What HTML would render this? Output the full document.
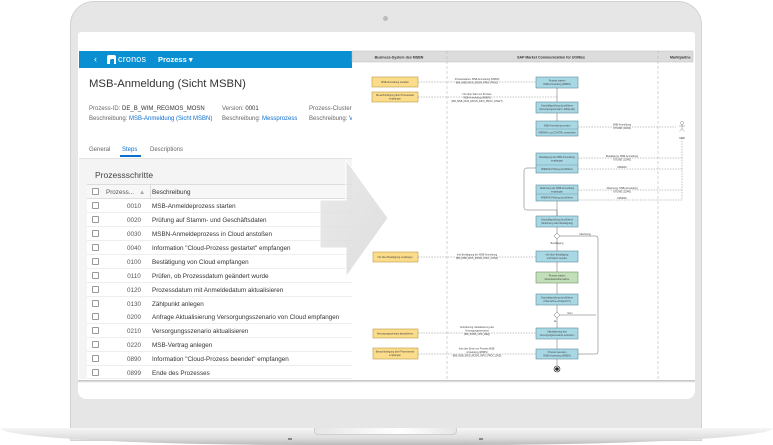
<!DOCTYPE html>
<html><head><meta charset="utf-8"><style>
*{margin:0;padding:0;box-sizing:border-box}
body{width:773px;height:445px;background:#fff;position:relative;overflow:hidden;font-family:"Liberation Sans",sans-serif;color:#333}
.a{position:absolute}
.t{position:absolute;white-space:nowrap}
.row{position:absolute;left:87px;width:265px;height:14px;background:#fff;border-bottom:1px solid #eee;font-size:6.3px}
.row .cb{position:absolute;left:5px;top:3px;width:7px;height:7px;border:1px solid #999;background:#fff;border-radius:1px}
.row .c{position:absolute;left:27px;width:40px;text-align:center;top:3.5px;color:#555}
.row .d{position:absolute;left:65px;top:3.5px;color:#333}
</style></head><body>
<div class="a" style="left:70px;top:1px;width:632px;height:440px;background:#e6e6e6;border:1px solid #d2d2d2;border-radius:24px 24px 0 0"></div>
<div class="a" style="left:383px;top:16px;width:5px;height:5px;border-radius:50%;background:#bbb"></div>
<div class="a" style="left:78px;top:32px;width:617px;height:367px;background:#fff;border-radius:3px 3px 8px 8px"></div>
<div class="a" style="left:78px;top:380px;width:617px;height:3px;background:linear-gradient(#bbb,#fff)"></div>
<div class="a" style="left:0;top:428px;width:773px;height:17px;background:linear-gradient(#f6f6f6,#dedede 60%,#b9b9b9);border-radius:0 0 40% 40%/0 0 100% 100%"></div>
<div class="a" style="left:314px;top:428px;width:143px;height:7px;background:linear-gradient(90deg,#e6e6e6,#fff 60%,#e6e6e6);border:1px solid #cfcfcf;border-top:none;border-radius:0 0 4px 4px"></div>
<div class="a" style="left:288px;top:438px;width:4px;height:2px;background:#888"></div>
<div class="a" style="left:479px;top:438px;width:4px;height:2px;background:#888"></div>

<div class="a" style="left:79px;top:51px;width:273px;height:328px;background:#fff;overflow:hidden">
 <div class="a" style="left:0;top:0;width:273px;height:17px;background:#0a8fd2"></div>
 <div class="t" style="left:15px;top:3px;color:#fff;font-size:9px">‹</div>
 <div class="a" style="left:28px;top:4px;width:9px;height:9px;background:#fff;border-radius:2px 2px 0 0"></div>
 <div class="a" style="left:31px;top:8px;width:4px;height:5px;background:#0a8fd2;border-radius:2px 0 0 0"></div>
 <div class="t" style="left:39px;top:3px;color:#fff;font-size:9px;letter-spacing:0.2px">cronos</div>
 <div class="t" style="left:79px;top:3.5px;color:#fff;font-size:7.5px;font-weight:bold">Prozess ▾</div>
 <div class="t" style="left:10px;top:27px;font-size:11.3px;color:#333">MSB-Anmeldung (Sicht MSBN)</div>
 <div class="t" style="left:10px;top:55px;font-size:6px;color:#666">Prozess-ID: <span style="color:#333">DE_B_WIM_REGMOS_MOSN</span></div>
 <div class="t" style="left:10px;top:65px;font-size:6px;color:#666">Beschreibung: <span style="color:#0a6ed1">MSB-Anmeldung (Sicht MSBN)</span></div>
 <div class="t" style="left:143px;top:55px;font-size:6px;color:#666">Version: <span style="color:#333">0001</span></div>
 <div class="t" style="left:143px;top:65px;font-size:6px;color:#666">Beschreibung: <span style="color:#0a6ed1">Messprozess</span></div>
 <div class="t" style="left:230px;top:55px;font-size:6px;color:#666">Prozess-Cluster:</div>
 <div class="t" style="left:230px;top:65px;font-size:6px;color:#666">Beschreibung: <span style="color:#0a6ed1">V</span></div>
 <div class="t" style="left:10px;top:96px;font-size:6px;color:#666">General</div>
 <div class="t" style="left:43px;top:96px;font-size:6px;color:#0a6ed1">Steps</div>
 <div class="a" style="left:41px;top:104px;width:21px;height:2px;background:#0a6ed1"></div>
 <div class="t" style="left:71px;top:96px;font-size:6px;color:#666">Descriptions</div>
 <div class="a" style="left:0;top:107px;width:273px;height:221px;background:#f4f4f4;border-top:1px solid #e2e2e2"></div>
 <div class="t" style="left:16px;top:119px;font-size:8.5px;color:#444">Prozessschritte</div>
</div>
<div class="row" style="top:184px;height:15px;background:#f7f7f7;border-top:1px solid #ddd;border-bottom:1px solid #ddd"><div class="cb"></div><div class="t" style="left:19px;top:4px;color:#555">Prozess...</div><div class="t" style="left:52px;top:4px;color:#aaa">▲</div><div class="a" style="left:63px;top:0;width:1px;height:14px;background:#ddd"></div><div class="t" style="left:65px;top:4px">Beschreibung</div></div>
<div class="row" style="top:199px"><div class="cb"></div><div class="c">0010</div><div class="d">MSB-Anmeldeprozess starten</div></div>
<div class="row" style="top:213px"><div class="cb"></div><div class="c">0020</div><div class="d">Prüfung auf Stamm- und Geschäftsdaten</div></div>
<div class="row" style="top:227px"><div class="cb"></div><div class="c">0030</div><div class="d">MSBN-Anmeldeprozess in Cloud anstoßen</div></div>
<div class="row" style="top:241px"><div class="cb"></div><div class="c">0040</div><div class="d">Information "Cloud-Prozess gestartet" empfangen</div></div>
<div class="row" style="top:255px"><div class="cb"></div><div class="c">0100</div><div class="d">Bestätigung von Cloud empfangen</div></div>
<div class="row" style="top:269px"><div class="cb"></div><div class="c">0110</div><div class="d">Prüfen, ob Prozessdatum geändert wurde</div></div>
<div class="row" style="top:283px"><div class="cb"></div><div class="c">0120</div><div class="d">Prozessdatum mit Anmeldedatum aktualisieren</div></div>
<div class="row" style="top:297px"><div class="cb"></div><div class="c">0130</div><div class="d">Zählpunkt anlegen</div></div>
<div class="row" style="top:310px"><div class="cb"></div><div class="c">0200</div><div class="d">Anfrage Aktualisierung Versorgungsszenario von Cloud empfangen</div></div>
<div class="row" style="top:324px"><div class="cb"></div><div class="c">0210</div><div class="d">Versorgungsszenario aktualisieren</div></div>
<div class="row" style="top:338px"><div class="cb"></div><div class="c">0220</div><div class="d">MSB-Vertrag anlegen</div></div>
<div class="row" style="top:352px"><div class="cb"></div><div class="c">0890</div><div class="d">Information "Cloud-Prozess beendet" empfangen</div></div>
<div class="row" style="top:366px;height:13px"><div class="cb"></div><div class="c">0899</div><div class="d">Ende des Prozesses</div></div>

<svg class="a" style="left:0;top:0" width="773" height="445" viewBox="0 0 773 445" font-family="Liberation Sans, sans-serif">
 <rect x="352" y="51" width="341" height="328" fill="#fff"/>
 <rect x="352" y="51" width="341" height="11" fill="#dcdcdc" stroke="#bbb" stroke-width="0.5"/>
 <text x="399" y="58.5" font-size="3.6" font-weight="bold" text-anchor="middle" fill="#333">Business-System des MSBN</text>
 <text x="551" y="58.5" font-size="3.6" font-weight="bold" text-anchor="middle" fill="#333">SAP Market Communication for Utilities</text>
 <text x="670" y="58.5" font-size="3.6" font-weight="bold" fill="#333">Marktpartne</text>
 <g stroke="#bbb" stroke-width="0.6" stroke-dasharray="3,2"><line x1="447" y1="51" x2="447" y2="379"/><line x1="658" y1="51" x2="658" y2="379"/></g>
 <g fill="#fbdc8a" stroke="#b99b45" stroke-width="0.6">
  <rect x="372" y="77" width="46" height="10"/><rect x="372" y="92" width="46" height="10"/>
  <rect x="373" y="252" width="45" height="10"/><rect x="373" y="329" width="45" height="9"/><rect x="373" y="348" width="45" height="11"/>
 </g>
 <g fill="#a9d8e5" stroke="#5d8d9c" stroke-width="0.6">
  <rect x="536" y="77" width="42" height="11"/><rect x="536" y="102" width="42" height="11"/>
  <rect x="536" y="121" width="42" height="15"/><rect x="536" y="153" width="42" height="20"/>
  <rect x="536" y="185" width="42" height="16"/><rect x="536" y="216" width="42" height="11"/>
  <rect x="536" y="251" width="42" height="11"/><rect x="536" y="294" width="42" height="11"/>
  <rect x="536" y="328" width="42" height="11"/><rect x="536" y="349" width="42" height="10"/>
 </g>
 <rect x="536" y="272" width="42" height="11" fill="#c3dfb9" stroke="#6f9463" stroke-width="0.6"/>
 <g stroke="#5d8d9c" stroke-width="0.4"><line x1="536" y1="129" x2="578" y2="129"/><line x1="536" y1="165" x2="578" y2="165"/><line x1="536" y1="194" x2="578" y2="194"/></g>
 <g stroke="#666" stroke-width="0.5" fill="none">
  <line x1="557" y1="88" x2="557" y2="102"/><line x1="557" y1="113" x2="557" y2="121"/><line x1="557" y1="201" x2="557" y2="216"/>
  <line x1="557" y1="227" x2="557" y2="251"/><line x1="557" y1="262" x2="557" y2="272"/><line x1="557" y1="283" x2="557" y2="294"/>
  <line x1="557" y1="305" x2="557" y2="328"/><line x1="557" y1="339" x2="557" y2="349"/><line x1="557" y1="359" x2="557" y2="366"/>
  <path d="M560 236H596Q598 236 598 238V352Q598 354 596 354H578"/>
  <path d="M560 315H596"/>
  <path d="M536 168H527Q524 168 524 171V207Q524 210 527 210H557V216"/>
 </g>
 <g fill="#fff" stroke="#666" stroke-width="0.5"><path d="M557 233l3 3-3 3-3-3z"/><path d="M557 312l3 3-3 3-3-3z"/></g>
 <circle cx="557" cy="369" r="3" fill="#fff" stroke="#222" stroke-width="0.6"/><circle cx="557" cy="369" r="1.8" fill="#222"/>
 <g stroke="#888" stroke-width="0.5" stroke-dasharray="1.5,1.2" fill="none">
  <line x1="418" y1="82" x2="536" y2="82"/><line x1="418" y1="97" x2="557" y2="97"/>
  <line x1="578" y1="127" x2="676" y2="127"/><line x1="578" y1="158" x2="682" y2="158"/><line x1="578" y1="169" x2="682" y2="169"/>
  <line x1="578" y1="190" x2="682" y2="190"/><line x1="578" y1="200" x2="682" y2="200"/><line x1="682" y1="138" x2="682" y2="200"/>
  <line x1="418" y1="257" x2="536" y2="257"/><line x1="418" y1="333" x2="536" y2="333"/><line x1="418" y1="354" x2="536" y2="354"/>
 </g>
 <g stroke="#888" stroke-width="0.5" fill="none"><circle cx="682" cy="123" r="1.5"/><path d="M682 124.5v4M679 126h6M682 128.5l-2.5 3M682 128.5l2.5 3"/></g>
 <g font-size="2.4" fill="#444" text-anchor="middle">
  <text x="395" y="83">MSB-Anmeldung erstellen</text><text x="395" y="96">Benachrichtigung über Prozessstart</text><text x="395" y="99.5">empfangen</text>
  <text x="395" y="258">Info über Bestätigung empfangen</text><text x="395" y="334.5">Versorgungsszenario aktualisieren</text>
  <text x="395" y="352.5">Benachrichtigung über Prozessende</text><text x="395" y="356">empfangen</text>
  <text x="557" y="81.5">Prozess starten</text><text x="557" y="85">MSB-Anmeldung (MSBN)</text>
  <text x="557" y="106.5">Geschäftsprüfung durchführen</text><text x="557" y="110">(Versorgungsszenario, Zählpunkt)</text>
  <text x="557" y="126.5">MSB-Anmeldung senden</text><text x="557" y="133.5">APERAK und CONTRL verarbeiten</text>
  <text x="557" y="158">Bestätigung der MSB-Anmeldung</text><text x="557" y="161.5">empfangen</text><text x="557" y="170">APERAK-Prüfung durchführen</text>
  <text x="557" y="189">Ablehnung der MSB-Anmeldung</text><text x="557" y="192.5">empfangen</text><text x="557" y="198.5">APERAK-Prüfung durchführen</text>
  <text x="557" y="220.5">Geschäftsprüfung durchführen</text><text x="557" y="224">(Ablehnung oder Bestätigung)</text>
  <text x="557" y="255.5">Info über Bestätigung</text><text x="557" y="259">und Datum senden</text>
  <text x="557" y="276.5">Prozess starten</text><text x="557" y="280">Messstellenübernahme</text>
  <text x="557" y="298.5">Geschäftsprüfung durchführen</text><text x="557" y="302">(Übernahme erfolgreich?)</text>
  <text x="557" y="332.5">Aktualisierung des</text><text x="557" y="336">Versorgungsszenarios anfordern</text>
  <text x="557" y="353">Prozess beenden</text><text x="557" y="356.5">MSB-Anmeldung (MSBN)</text>
  <text x="477" y="80">Prozessstarten: MSB-Anmeldung (MSBN)</text><text x="477" y="83.5">(BM_MSB_MOS_MOSN_PRIO_PROC)</text>
  <text x="477" y="95">Info über Start von Prozess</text><text x="477" y="98.5">MSB-Anmeldung (MSBN)</text><text x="477" y="102">(BM_MSB_MOS_MOSN_INFO_PROC_START)</text>
  <text x="622" y="125.5">MSB-Anmeldung</text><text x="622" y="129">UTILMD (11044)</text>
  <text x="622" y="157">Bestätigung: MSB-Anmeldung</text><text x="622" y="160.5">UTILMD (11045)</text><text x="622" y="168">APERAK</text>
  <text x="622" y="189">Ablehnung: MSB-Anmeldung</text><text x="622" y="192.5">UTILMD (11046)</text><text x="622" y="199">APERAK</text>
  <text x="477" y="255.5">Info Bestätigung der MSB-Anmeldung</text><text x="477" y="259">(BM_MSB_MOS_MOSN_INFO_CONF)</text>
  <text x="477" y="328">Anforderung: Aktualisierung des</text><text x="477" y="331.5">Versorgungsszenarios</text><text x="477" y="335">(BM_SUBS_UPD_REQ)</text>
  <text x="477" y="349.5">Info über Ende von Prozess MSB-</text><text x="477" y="353">Anmeldung (MSBN)</text><text x="477" y="356.5">(BM_MSB_MOS_MOSN_INFO_PROC_END)</text>
  <text x="557" y="244">Bestätigung</text><text x="585" y="235">Ablehnung</text><text x="570" y="314">Nein</text><text x="555" y="322">Ja</text>
  <text x="682" y="139">MSB</text>
 </g>
</svg>

<svg class="a" style="left:0;top:0" width="773" height="445" viewBox="0 0 773 445">
 <defs><linearGradient id="g" x1="0" y1="0" x2="1" y2="1"><stop offset="0" stop-color="#e4e4e4"/><stop offset="1" stop-color="#d6d6d6"/></linearGradient></defs>
 <path d="M320 200H346V160L388 218L346 277V248H320Z" fill="url(#g)" fill-opacity="0.8" stroke="#fff" stroke-width="1"/>
</svg>
</body></html>
